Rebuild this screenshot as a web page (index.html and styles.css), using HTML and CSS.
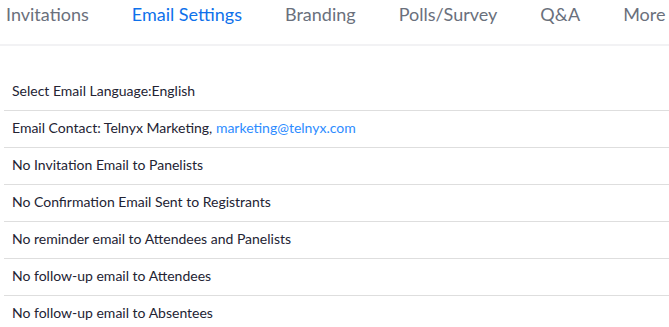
FILE: index.html
```html
<!DOCTYPE html>
<html lang="en">
<head>
  <meta charset="UTF-8" />
  <meta name="viewport" content="width=device-width, initial-scale=1.0"/>
  <title>Email Settings</title>
  <link rel="stylesheet" href="styles.css">
</head>
<body>

<nav class="tabs">
  <a class="tab">Invitations</a>
  <a class="tab active">Email Settings</a>
  <a class="tab">Branding</a>
  <a class="tab">Polls/Survey</a>
  <a class="tab">Q&amp;A</a>
  <a class="tab">More</a>
</nav>

<div class="settings">
  <div class="row">Select Email Language:English</div>
  <div class="row">Email Contact: Telnyx Marketing, <a class="link">marketing@telnyx.com</a></div>
  <div class="row">No Invitation Email to Panelists</div>
  <div class="row">No Confirmation Email Sent to Registrants</div>
  <div class="row">No reminder email to Attendees and Panelists</div>
  <div class="row">No follow-up email to Attendees</div>
  <div class="row">No follow-up email to Absentees</div>
</div>

</body>
</html>
```

FILE: styles.css
```css
body {
  font-family: Lato, "Open Sans", sans-serif;
  background: #fff;
  margin: 0;
  color: #232333;
}
.tabs {
  display: flex;
  gap: 43px;
  padding-left: 6px;
  height: 44px;
  border-bottom: 2px solid #f2f2f4;
  white-space: nowrap;
  overflow: hidden;
}
.tab {
  font-size: 18px;
  line-height: 29px;
  color: #6a707c;
  height: 44px;
  box-sizing: border-box;
}
.tab.active {
  color: #0e71eb;
  border-bottom: 2px solid #0e71eb;
  height: 46px;
}
.settings {
  margin-top: 27px;
  padding-left: 4px;
}
.row {
  font-size: 14px;
  height: 36px;
  line-height: 34px;
  padding-left: 8px;
  border-bottom: 1px solid #dedede;
}
.row:first-child {
  height: 37px;
  line-height: 36px;
}
.row:last-child {
  border-bottom: none;
}
.link {
  color: #2d8cff;
}
```
